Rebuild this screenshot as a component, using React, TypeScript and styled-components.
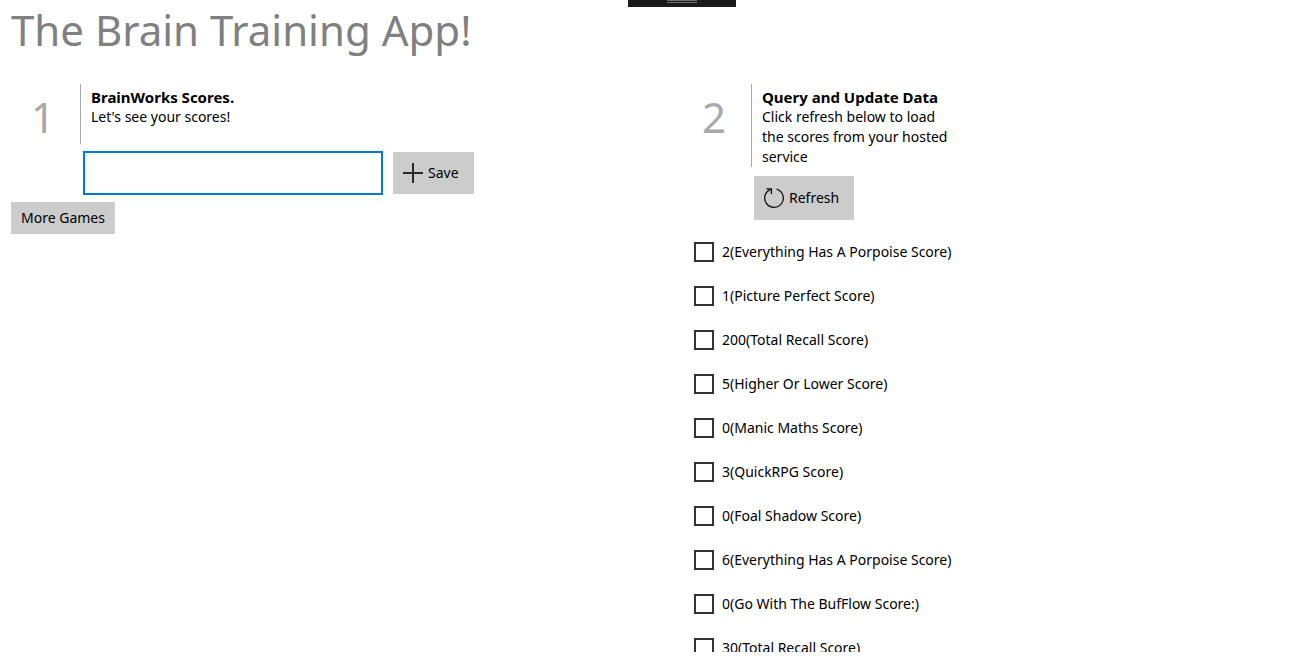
import React from "react";
import styled, { createGlobalStyle } from "styled-components";

const GlobalStyle = createGlobalStyle`
  * { box-sizing: border-box; }
  body {
    margin: 0;
    background: #fff;
    color: #000;
    font: 14px/20px "Noto Sans", "Open Sans", sans-serif;
  }
`;

const Page = styled.main`
  height: calc(100vh - 4px);
  padding: 0 11px;
  overflow: hidden;
  position: relative;
`;

const DebugTab = styled.div`
  position: absolute;
  top: 0;
  left: 50%;
  width: 108px;
  height: 7px;
  margin-left: -23px;
  background: #1b1b1b;
`;

const Grip = styled.div`
  width: 30px;
  height: 3px;
  margin-left: 39px;
  border: solid #6e6e6e;
  border-width: 1px 0;
`;

const Title = styled.h1`
  margin: 0;
  height: 84px;
  color: #808080;
  font-size: 42px;
  font-weight: 400;
  line-height: 60px;
  white-space: nowrap;
`;

const Columns = styled.div`
  display: grid;
  grid-template-columns: 1fr 1fr;
  column-gap: 62px;
`;

const StepHeader = styled.header`
  display: flex;
  min-height: 60px;
`;

const StepNumber = styled.div`
  width: 69px;
  padding-right: 5px;
  color: #a9a9a9;
  font-size: 42px;
  line-height: 66px;
  height: 60px;
  text-align: center;
`;

const StepText = styled.div`
  width: 201px;
  padding: 3px 0 0 10px;
  border-left: 1px solid #a9a9a9;
`;

const StepTitle = styled.h2`
  margin: 0;
  font-size: 15px;
  font-weight: 700;
  line-height: 20px;
`;

const StepDescription = styled.p`
  margin: 0;
`;

const EntryRow = styled.form`
  display: flex;
  align-items: center;
  gap: 10px;
  margin: 7px 0 7px 72px;
`;

const ScoreInput = styled.input`
  width: 300px;
  height: 44px;
  padding: 0 10px;
  border: 2px solid #0078d7;
  background: #fff;
  font: inherit;
  outline: none;
`;

const Button = styled.button<{ $height: number }>`
  display: inline-flex;
  align-items: center;
  gap: 5px;
  height: ${(p) => p.$height}px;
  padding: 0 ${(p) => (p.$height > 40 ? 15 : 10)}px 0 10px;
  border: 0;
  background: #ccc;
  color: #000;
  font: inherit;
  white-space: nowrap;
`;

const RefreshRow = styled.div`
  display: flex;
  margin: 9px 0 10px 72px;
`;

const ScoreList = styled.ul`
  margin: 0;
  padding: 0 0 0 12px;
  list-style: none;
`;

const ScoreLabel = styled.label`
  display: flex;
  align-items: center;
  gap: 8px;
  height: 44px;
`;

const Checkbox = styled.input`
  appearance: none;
  width: 20px;
  height: 20px;
  margin: 0;
  border: 2px solid #333;
  background: #fff;

  &:checked {
    background: #0078d7;
  }
`;

const PlusIcon = () => (
  <svg width="20" height="20" viewBox="0 0 20 20" fill="none" stroke="#000" strokeOpacity="0.8" strokeWidth="2" aria-hidden="true">
    <path d="M10 0v20M0 10h20" />
  </svg>
);

const RefreshIcon = () => (
  <svg width="20" height="20" viewBox="0 0 20 20" fill="none" stroke="#111" strokeWidth="1.3" aria-hidden="true">
    <path d="M12.6 1.1A9.3 9.3 0 1 1 6.8 1.3" />
    <path d="M2.4 0.9h5v5" />
  </svg>
);

const scores = [
  "2(Everything Has A Porpoise Score)",
  "1(Picture Perfect Score)",
  "200(Total Recall Score)",
  "5(Higher Or Lower Score)",
  "0(Manic Maths Score)",
  "3(QuickRPG Score)",
  "0(Foal Shadow Score)",
  "6(Everything Has A Porpoise Score)",
  "0(Go With The BufFlow Score:)",
  "30(Total Recall Score)",
];

interface StepProps {
  number: number;
  title: string;
  description: string;
}

const Step = ({ number, title, description }: StepProps) => (
  <StepHeader>
    <StepNumber>{number}</StepNumber>
    <StepText>
      <StepTitle>{title}</StepTitle>
      <StepDescription>{description}</StepDescription>
    </StepText>
  </StepHeader>
);

export default function App() {
  return (
    <>
      <GlobalStyle />
      <Page>
        <Title>The Brain Training App!</Title>
        <Columns>
          <section>
            <Step number={1} title="BrainWorks Scores." description="Let's see your scores!" />
            <EntryRow onSubmit={(e) => e.preventDefault()}>
              <ScoreInput type="text" aria-label="Score" />
              <Button type="submit" $height={42}>
                <PlusIcon />
                Save
              </Button>
            </EntryRow>
            <Button type="button" $height={32}>More Games</Button>
          </section>
          <section>
            <Step
              number={2}
              title="Query and Update Data"
              description="Click refresh below to load the scores from your hosted service"
            />
            <RefreshRow>
              <Button type="button" $height={44}>
                <RefreshIcon />
                Refresh
              </Button>
            </RefreshRow>
            <ScoreList>
              {scores.map((score) => (
                <li key={score}>
                  <ScoreLabel>
                    <Checkbox type="checkbox" />
                    {score}
                  </ScoreLabel>
                </li>
              ))}
            </ScoreList>
          </section>
        </Columns>
        <DebugTab>
          <Grip />
        </DebugTab>
      </Page>
    </>
  );
}
